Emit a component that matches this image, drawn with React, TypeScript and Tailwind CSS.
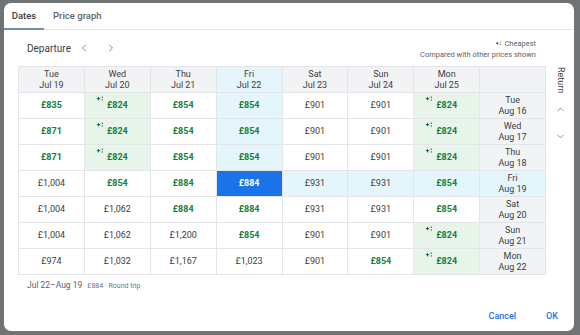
import { ChevronDown, ChevronLeft, ChevronRight, ChevronUp } from "lucide-react";

type Kind = "n" | "g" | "c" | "s";
type Cell = [string, Kind];

const departures = [
  ["Tue", "Jul 19"],
  ["Wed", "Jul 20"],
  ["Thu", "Jul 21"],
  ["Fri", "Jul 22"],
  ["Sat", "Jul 23"],
  ["Sun", "Jul 24"],
  ["Mon", "Jul 25"],
];

const rows: { day: string; date: string; cells: Cell[] }[] = [
  {
    day: "Tue",
    date: "Aug 16",
    cells: [["£835", "g"], ["£824", "c"], ["£854", "g"], ["£854", "g"], ["£901", "n"], ["£901", "n"], ["£824", "c"]],
  },
  {
    day: "Wed",
    date: "Aug 17",
    cells: [["£871", "g"], ["£824", "c"], ["£854", "g"], ["£854", "g"], ["£901", "n"], ["£901", "n"], ["£824", "c"]],
  },
  {
    day: "Thu",
    date: "Aug 18",
    cells: [["£871", "g"], ["£824", "c"], ["£854", "g"], ["£854", "g"], ["£901", "n"], ["£901", "n"], ["£824", "c"]],
  },
  {
    day: "Fri",
    date: "Aug 19",
    cells: [["£1,004", "n"], ["£854", "g"], ["£884", "g"], ["£884", "s"], ["£931", "n"], ["£931", "n"], ["£854", "g"]],
  },
  {
    day: "Sat",
    date: "Aug 20",
    cells: [["£1,004", "n"], ["£1,062", "n"], ["£884", "g"], ["£884", "g"], ["£931", "n"], ["£931", "n"], ["£854", "g"]],
  },
  {
    day: "Sun",
    date: "Aug 21",
    cells: [["£1,004", "n"], ["£1,062", "n"], ["£1,200", "n"], ["£854", "g"], ["£901", "n"], ["£901", "n"], ["£824", "c"]],
  },
  {
    day: "Mon",
    date: "Aug 22",
    cells: [["£974", "n"], ["£1,032", "n"], ["£1,167", "n"], ["£1,023", "n"], ["£901", "n"], ["£854", "g"], ["£824", "c"]],
  },
];

const SEL_ROW = 3;
const SEL_COL = 3;

function Sparkle({ className = "" }: { className?: string }) {
  return (
    <svg viewBox="0 0 10 8" className={className} fill="currentColor">
      <path d="M3 0.5 L3.8 2.7 L6 3.5 L3.8 4.3 L3 6.5 L2.2 4.3 L0 3.5 L2.2 2.7 Z" />
      <circle cx="8" cy="1.6" r="0.9" />
      <circle cx="8" cy="5.2" r="0.9" />
    </svg>
  );
}

function PriceCell({ price, kind, r, c }: { price: string; kind: Kind; r: number; c: number }) {
  // highlight runs from the selected cell up to the column header and right to the row header
  const hl = (c === SEL_COL && r < SEL_ROW) || (r === SEL_ROW && c > SEL_COL);
  let bg = hl ? "bg-[#e4f6fb]" : "bg-white";
  if (kind === "c") bg = "bg-[#e6f4ea]";
  if (kind === "s") bg = "bg-[#1a73e8]";
  const text =
    kind === "s"
      ? "text-white font-bold"
      : kind === "n"
        ? "text-[#3c4043]"
        : "text-[#188038] font-bold";
  return (
    <div
      className={`flex h-[26px] items-center justify-center border-b border-r border-[#e3e5e8] text-[9px] ${bg} ${text}`}
    >
      <span className="relative">
        {kind === "c" && (
          <Sparkle className="absolute -left-[11px] -top-[3px] h-[6px] w-[8px] text-[#0d652d]" />
        )}
        {price}
      </span>
    </div>
  );
}

export default function App() {
  return (
    <div className="h-[335px] w-[580px] bg-[#707274] pl-[4px] pt-[3px] font-['Roboto',sans-serif]">
      <div className="flex h-[328px] w-[570px] flex-col overflow-hidden rounded-[7px] bg-white">
        {/* tabs */}
        <div className="flex h-[27px] shrink-0 items-stretch border-b border-[#e3e5e8] text-[9.5px] font-medium">
          <div className="relative flex w-[40px] items-center justify-center text-[#3c4043]">
            Dates
            <div className="absolute bottom-[-1px] left-0 h-[2px] w-full bg-[#6f8fb7]" />
          </div>
          <div className="flex items-center pl-[9px] text-[#5f6368]">Price graph</div>
        </div>

        {/* toolbar */}
        <div className="flex h-[36px] shrink-0 items-center justify-between pl-[23px] pr-[38px]">
          <div className="flex items-center text-[10px] text-[#3c4043]">
            <span>Departure</span>
            <ChevronLeft className="ml-[7px] h-[12px] w-[12px] text-[#5f6368]" strokeWidth={1.5} />
            <ChevronRight className="ml-[15px] h-[12px] w-[12px] text-[#5f6368]" strokeWidth={1.5} />
          </div>
          <div className="flex flex-col items-end gap-[2px] pt-[2px] text-[7.5px] leading-[9px] text-[#5f6368]">
            <div className="flex items-center gap-[2px]">
              <Sparkle className="h-[5px] w-[7px] text-[#0d652d]" />
              <span>Cheapest</span>
            </div>
            <div>Compared with other prices shown</div>
          </div>
        </div>

        {/* grid + return column */}
        <div className="flex shrink-0 pl-[14px]">
          <div className="grid w-[528px] grid-cols-8 border-l border-t border-[#e3e5e8]">
            {departures.map(([d, dt], i) => (
              <div
                key={d}
                className={`flex h-[26px] flex-col items-center justify-center border-b border-r border-[#e3e5e8] text-[9px] leading-[11px] text-[#3c4043] ${
                  i === SEL_COL ? "bg-[#e4f6fb]" : "bg-[#f1f3f4]"
                }`}
              >
                <span>{d}</span>
                <span>{dt}</span>
              </div>
            ))}
            <div className="h-[26px] border-b border-r border-[#e3e5e8] bg-[#f1f3f4]" />
            {rows.map((row, r) => (
              <div key={row.date} className="contents">
                {row.cells.map(([p, k], c) => (
                  <PriceCell key={c} price={p} kind={k} r={r} c={c} />
                ))}
                <div
                  className={`flex h-[26px] flex-col items-center justify-center border-b border-r border-[#e3e5e8] text-[9px] leading-[11px] text-[#3c4043] ${
                    r === SEL_ROW ? "bg-[#e4f6fb]" : "bg-[#f1f3f4]"
                  }`}
                >
                  <span>{row.day}</span>
                  <span>{row.date}</span>
                </div>
              </div>
            ))}
          </div>
          <div className="flex w-[28px] flex-col items-center pt-[1px] text-[#3c4043]">
            <span className="text-[9px] [writing-mode:vertical-rl]">Return</span>
            <ChevronUp className="mt-[11px] h-[11px] w-[11px] text-[#5f6368]" strokeWidth={1.5} />
            <ChevronDown className="mt-[16px] h-[11px] w-[11px] text-[#5f6368]" strokeWidth={1.5} />
          </div>
        </div>

        {/* footer summary */}
        <div className="flex items-baseline gap-[5px] pl-[23px] pt-[4px]">
          <span className="text-[8.5px] text-[#5f6368]">Jul 22–Aug 19</span>
          <span className="text-[7px] text-[#70757a]">£884 · Round trip</span>
        </div>

        <div className="flex flex-1 items-end justify-end gap-[30px] pb-[8px] pr-[16px] text-[9px] font-medium text-[#1a73e8]">
          <span>Cancel</span>
          <span>OK</span>
        </div>
      </div>
    </div>
  );
}
